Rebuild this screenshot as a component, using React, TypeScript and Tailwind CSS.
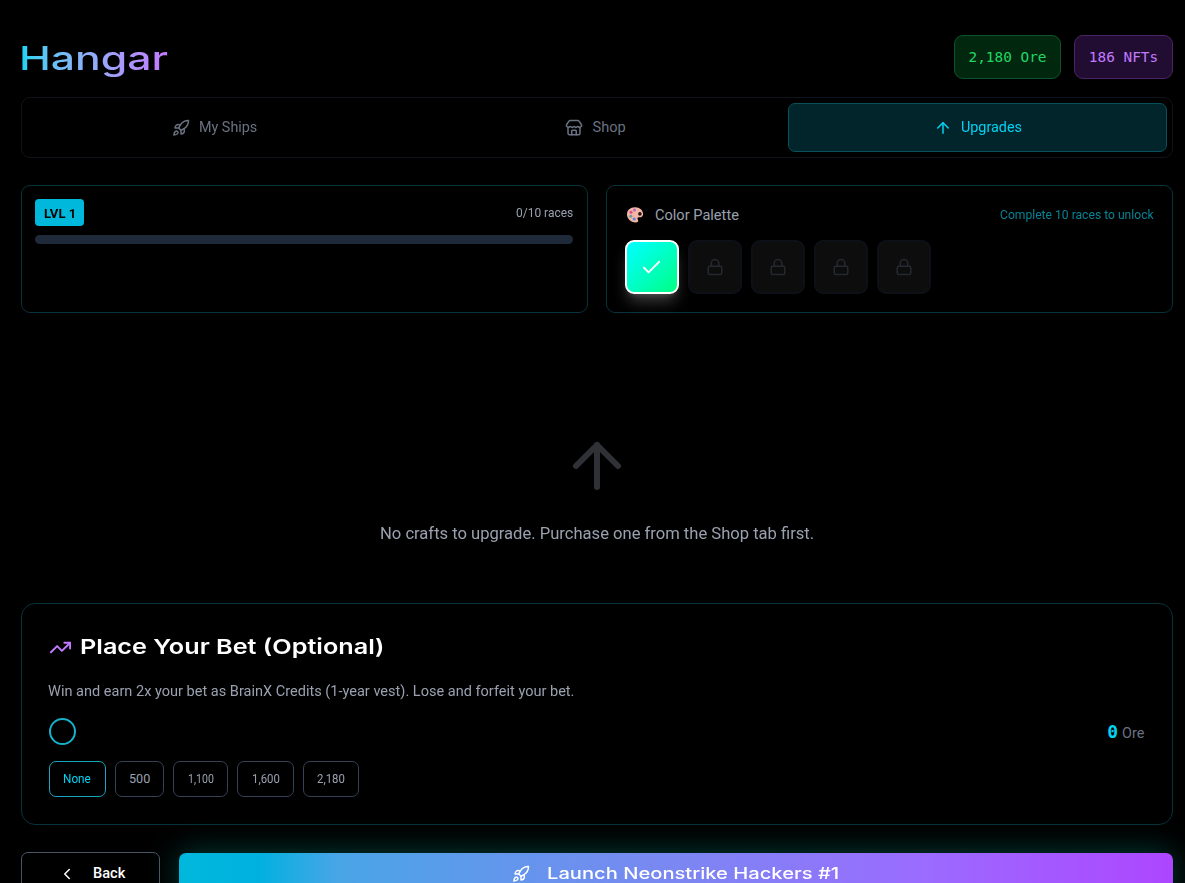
import { useLayoutEffect, useRef, useState } from "react";
import type { ReactNode } from "react";
import { ArrowUp, Check, ChevronLeft, Lock, Rocket, Store, TrendingUp } from "lucide-react";

/* Stretches or condenses one line of text to the width its class gives. */
function Fit({ className, children }: { className: string; children: ReactNode }) {
  const box = useRef<HTMLSpanElement>(null);
  const line = useRef<HTMLSpanElement>(null);
  const [scale, setScale] = useState(1);
  useLayoutEffect(() => {
    if (box.current && line.current && line.current.offsetWidth > 0) {
      setScale(box.current.getBoundingClientRect().width / line.current.offsetWidth);
    }
  }, []);
  return (
    <span ref={box} className={`block shrink-0 text-left ${className}`}>
      <span
        ref={line}
        className="inline-block origin-left whitespace-nowrap align-top"
        style={{ transform: `scaleX(${scale})` }}
      >
        {children}
      </span>
    </span>
  );
}

function PaletteIcon() {
  return (
    <svg width="18" height="18" viewBox="0 0 18 18" className="shrink-0">
      <path
        d="M9.2 1.2C4.5 1 1 4 1 8.3c0 4.500 3.700 7.900 8.500 8.100 1.900.1 2.800-.6 2.700-1.700-.1-1.200-1.100-1.700-.7-2.700.5-1 2-.6 3.400-.8 1.400-.3 2.200-1.500 2.200-3.100C17.100 4.200 13.700 1.400 9.200 1.200Z"
        fill="#f4b5a4"
      />
      <circle cx="13.900" cy="7.900" r="1.800" fill="#241513" />
      <circle cx="8.500" cy="4" r="1.500" fill="#b667c8" />
      <circle cx="5" cy="6.200" r="1.500" fill="#dc4f8b" />
      <circle cx="4.800" cy="10.300" r="1.500" fill="#5fa0a5" />
      <circle cx="8.200" cy="13" r="1.600" fill="#5f87d8" />
    </svg>
  );
}

const bets = [
  { label: "500", box: "w-[49px]", text: "w-[21px]" },
  { label: "1,100", box: "w-[55px]", text: "w-[26px]" },
  { label: "1,600", box: "w-[57px]", text: "w-[28px]" },
  { label: "2,180", box: "w-[56px]", text: "w-[28px]" },
];

export default function App() {
  return (
    <div className="h-[883px] overflow-hidden bg-black pt-[35px] pr-3 pl-[21px] font-[Roboto,sans-serif] text-[#99a1af]">
      <header className="flex h-11 items-center justify-between">
        <h1 className="pt-px font-[Inter,sans-serif] text-[33px] leading-[44px] font-medium">
          <Fit className="-ml-[2px] w-[149px] [&>span]:bg-gradient-to-r [&>span]:from-[#00d3f2] [&>span]:to-[#c27aff] [&>span]:bg-clip-text [&>span]:text-transparent">
            Hangar
          </Fit>
        </h1>
        <div className="flex gap-[13px] font-['DejaVu_Sans_Mono',monospace] text-[14.400px]">
          <div className="flex h-11 w-[107px] items-center justify-center rounded-[9px] border border-[#0d542b] bg-[#02270f] pt-[2px] text-[#1fd765]">
            2,180 Ore
          </div>
          <div className="flex h-11 w-[99px] items-center justify-center rounded-[9px] border border-[#4b2366] bg-[#220d32] pt-[2px] text-[#c27aff]">
            186 NFTs
          </div>
        </div>
      </header>

      <nav className="mt-[18px] grid h-[61px] grid-cols-3 gap-px rounded-[9px] border border-[#11131a] p-[5px] text-[14.600px] leading-5 text-[#6a7282]">
        <div className="flex items-center justify-center gap-[9px] pr-1">
          <Rocket size={18} />
          <Fit className="w-[58px] pb-[2px]">My Ships</Fit>
        </div>
        <div className="flex items-center justify-center gap-[9px] pr-[3px]">
          <Store size={18} />
          <Fit className="w-[33px] pb-[2px]">Shop</Fit>
        </div>
        <div className="flex items-center justify-center gap-[9px] rounded-[7px] border border-[#07505c] bg-[#01252b] pl-[2px] text-[#00d3f2]">
          <ArrowUp size={18} />
          <Fit className="w-[61px] pb-[2px]">Upgrades</Fit>
        </div>
      </nav>

      <section className="mt-[27px] grid grid-cols-2 gap-[18px]">
        <div className="h-32 rounded-[9px] border border-[#07333a] py-[13px] pr-[14px] pl-[13px]">
          <div className="flex h-[27px] items-center justify-between">
            <div className="flex h-[27px] w-[49px] items-center justify-center rounded-[4px] bg-[#00b8db] text-[13.500px] leading-5 font-bold text-black">
              <Fit className="w-8">LVL 1</Fit>
            </div>
            <Fit className="w-[57px] text-[12.600px] leading-5">0/10 races</Fit>
          </div>
          <div className="mt-[9px] h-[9px] rounded-full bg-[#1e2939]" />
        </div>
        <div className="h-32 rounded-[9px] border border-[#07333a] px-[18px] pt-[19px]">
          <div className="flex h-5 items-center justify-between">
            <div className="flex items-center gap-[11px] pl-px text-[14.600px] leading-5">
              <PaletteIcon />
              <Fit className="w-[84px]">Color Palette</Fit>
            </div>
            <Fit className="w-[154px] text-[12.600px] leading-5 text-[#078395]">Complete 10 races to unlock</Fit>
          </div>
          <div className="mt-[15px] flex gap-[9px]">
            <div className="flex size-[54px] items-center justify-center rounded-[9px] border-2 border-white bg-linear-to-br from-[#00ffff] to-[#00ff80] pr-[2px] text-white shadow-[0_10px_15px_-3px_rgba(255,255,255,0.24),0_4px_6px_-4px_rgba(255,255,255,0.2)]">
              <Check size={23} strokeWidth={1.900} />
            </div>
            {[1, 2, 3, 4].map((slot) => (
              <div
                key={slot}
                className="flex size-[54px] items-center justify-center rounded-[9px] border-2 border-[#0d1017] bg-[#0d0d0d] text-[#25282e]"
              >
                <Lock size={18} />
              </div>
            ))}
          </div>
        </div>
      </section>

      <section className="flex flex-col items-center pt-[117px]">
        <ArrowUp size={72} className="text-[#303136]" />
        <Fit className="mt-[20px] w-[434px] text-[16px] leading-6">
          No crafts to upgrade. Purchase one from the Shop tab first.
        </Fit>
      </section>

      <section className="mt-[57px] h-[222px] rounded-[14px] border border-[#07333a] px-[27px] pt-[27px]">
        <div className="flex h-8 items-center gap-2 font-[Inter,sans-serif] text-[20.500px] leading-8 font-semibold text-white">
          <TrendingUp size={23} className="text-[#c27aff]" />
          <Fit className="w-[304px]">Place Your Bet (Optional)</Fit>
        </div>
        <Fit className="-ml-px mt-[18px] w-[526px] text-[14.600px] leading-5">
          Win and earn 2x your bet as BrainX Credits (1-year vest). Lose and forfeit your bet.
        </Fit>
        <div className="mt-[17px] flex h-[27px] items-center justify-between">
          <div className="size-[27px] rounded-full border-2 border-[#16b1ca]" />
          <div className="flex items-baseline gap-1 pt-[3px] pr-px">
            <span className="font-['DejaVu_Sans_Mono',monospace] text-[18px] leading-6 font-bold text-[#00d3f2]">0</span>
            <Fit className="w-[22px] text-[14.400px] leading-6 text-[#6a7282]">Ore</Fit>
          </div>
        </div>
        <div className="mt-4 flex gap-[9px] text-[12.600px] leading-5">
          <div className="flex h-9 w-[57px] items-center justify-center rounded-[7px] border border-[#16a6bd] pr-px text-[#00d3f2]">
            <Fit className="w-7">None</Fit>
          </div>
          {bets.map((bet) => (
            <div
              key={bet.label}
              className={`flex h-9 items-center justify-center rounded-[7px] border border-[#364153] ${bet.box}`}
            >
              <Fit className={bet.text}>{bet.label}</Fit>
            </div>
          ))}
        </div>
      </section>

      <footer className="mt-[27px] flex gap-[19px]">
        <button className="flex h-[43px] w-[139px] items-center rounded-[7px] border border-[#4a5565] pl-9 text-[14.600px] leading-5 font-medium text-white">
          <ChevronLeft size={18} />
          <Fit className="ml-[17px] w-[32px] pb-[2px]">Back</Fit>
        </button>
        <button className="mt-px flex h-[42px] flex-1 items-center justify-center rounded-t-[7px] bg-[linear-gradient(90deg,#00b8db_0%,#00b1e0_8%,#49a5e6_16%,#7b87f2_50%,#9b6bff_75%,#ad46ff_100%)] pr-[2px] font-[Inter,sans-serif] text-[16px] leading-6 font-medium text-white shadow-[0_0_32px_rgba(0,255,224,0.26)]">
          <Rocket size={18} />
          <Fit className="ml-[17px] w-[292px] pb-[2px]">Launch Neonstrike Hackers #1</Fit>
        </button>
      </footer>
    </div>
  );
}
